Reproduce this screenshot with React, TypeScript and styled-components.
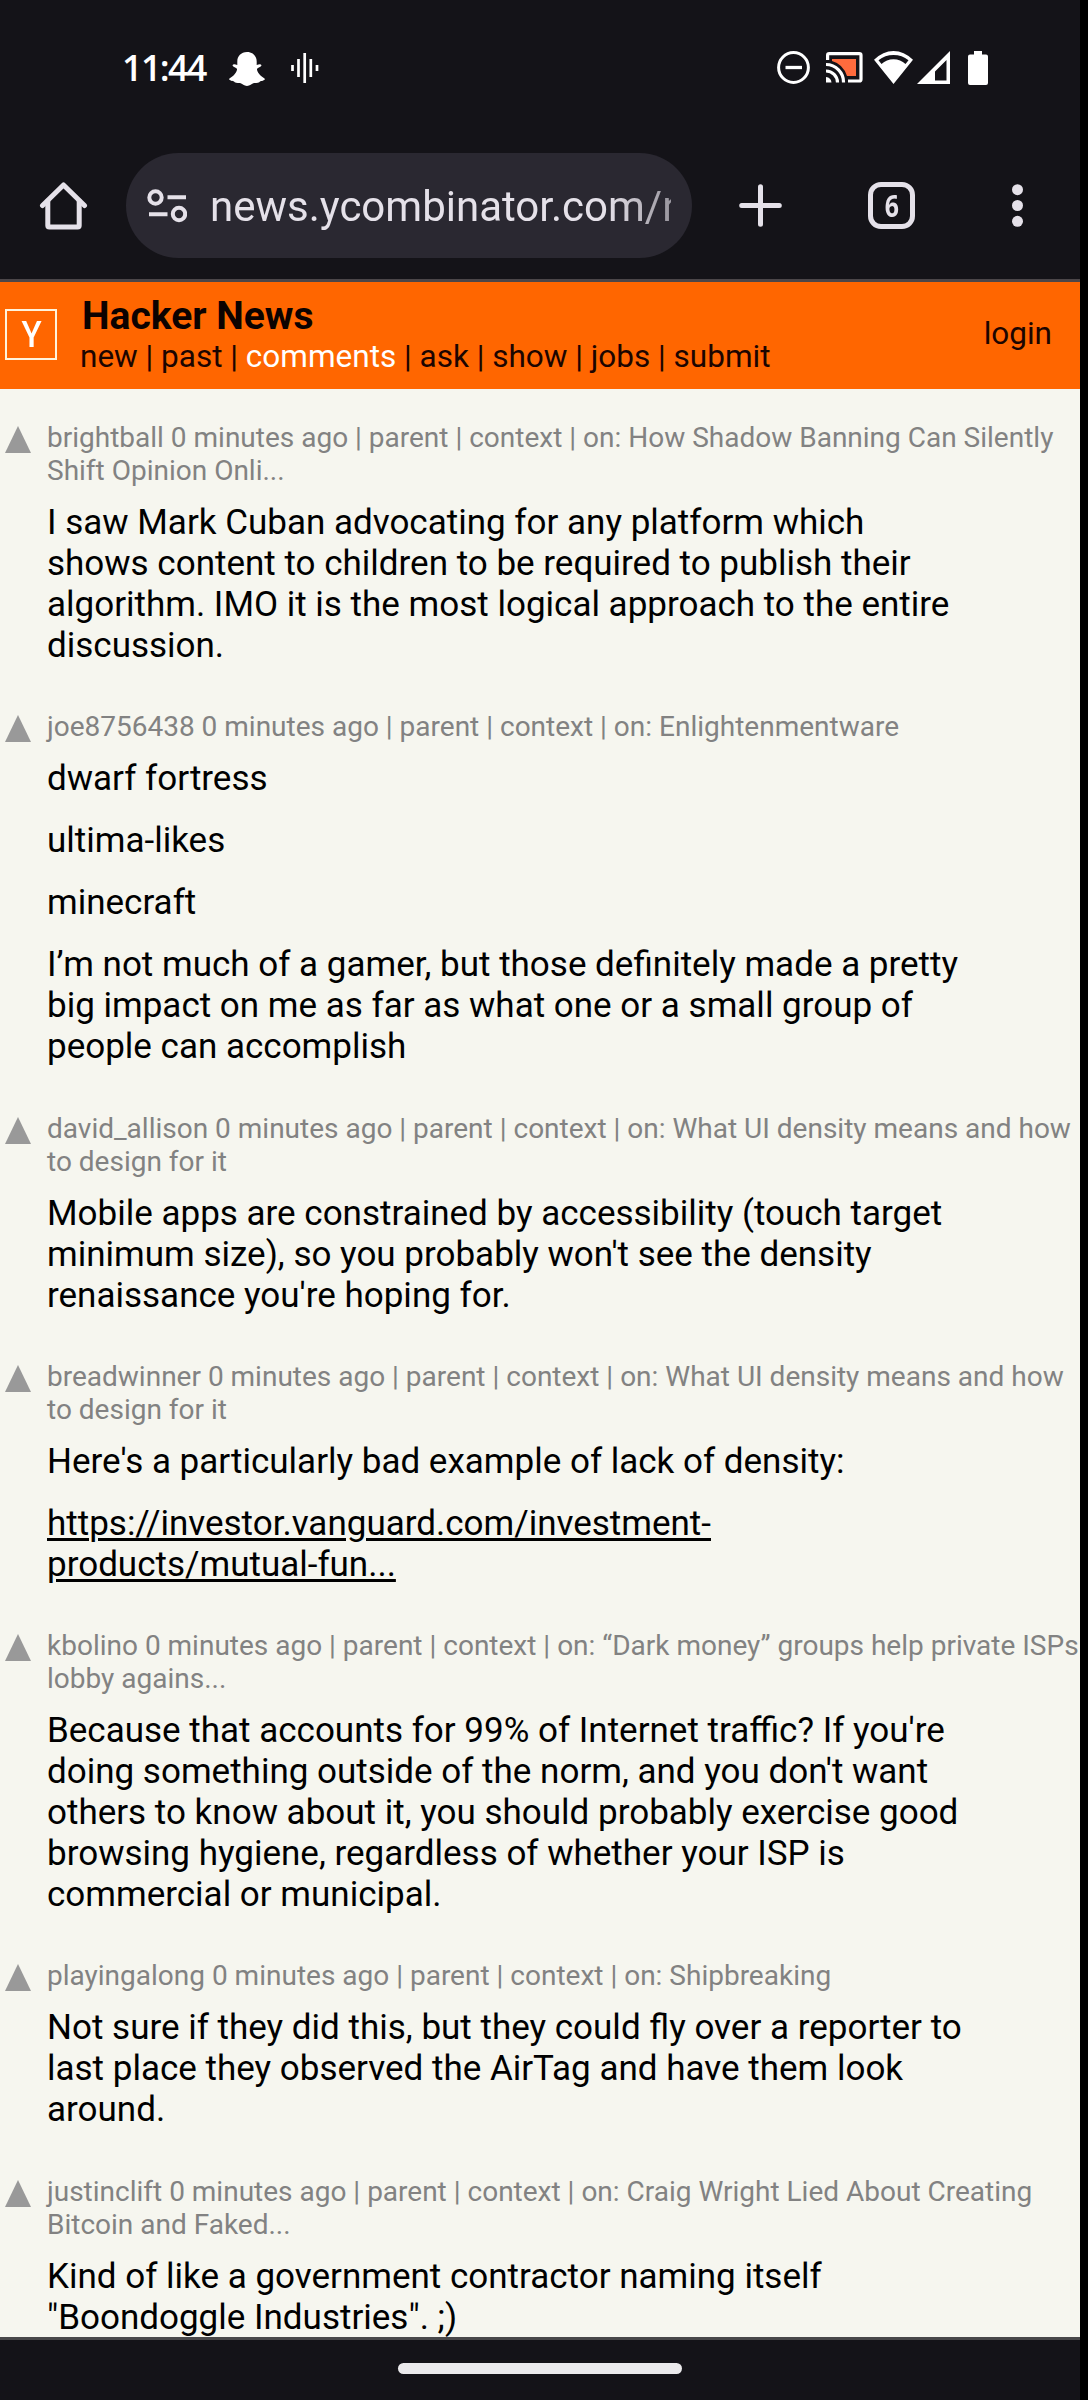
import React from 'react';
import styled, { createGlobalStyle } from 'styled-components';

const GlobalStyle = createGlobalStyle`
  * { box-sizing: border-box; }
  body { margin: 0; background: #000; font-family: Roboto, "Liberation Sans", sans-serif; }
  svg { display: block; }
`;

const Phone = styled.div`
  width: 1080px;
  height: 2400px;
  display: flex;
  flex-direction: column;
  background: #141318;
  overflow: hidden;
`;

const StatusBar = styled.header`
  height: 135px;
  flex: none;
  display: flex;
  align-items: center;
  justify-content: space-between;
  padding: 0 92px 0 122px;
  color: #fff;
`;

const StatusGroup = styled.div`
  display: flex;
  align-items: center;
`;

const Clock = styled.span`
  width: 107px;
  font: 600 36px/40px "Open Sans", sans-serif;
  letter-spacing: -1.7px;
`;

const Toolbar = styled.div`
  height: 144px;
  flex: none;
  display: flex;
  align-items: center;
  padding: 0 56px 3px 39px;
  color: #e5e1e9;
`;

const AddressBar = styled.div`
  width: 566px;
  height: 105px;
  margin-left: 38px;
  padding: 0 21px;
  display: flex;
  align-items: center;
  border-radius: 53px;
  background: #2a2831;
`;

const Url = styled.div`
  flex: 1;
  margin-left: 23px;
  padding-top: 3px;
  overflow: hidden;
  white-space: nowrap;
  font-size: 42px;
  line-height: 56px;
  mask-image: linear-gradient(to right, #000 86%, rgba(0, 0, 0, 0.6) 100%);
`;

const IconButton = styled.button<{ $gap?: number }>`
  flex: none;
  margin: 0 0 0 ${(p) => p.$gap ?? 0}px;
  padding: 0;
  border: 0;
  background: none;
  color: inherit;
`;

const TabCount = styled(IconButton)`
  width: 47px;
  height: 47px;
  border: 5px solid currentColor;
  border-radius: 13px;
  display: flex;
  align-items: center;
  justify-content: center;
  font: 700 31px/37px "Open Sans", sans-serif;

  span { transform: scaleX(0.8); }
`;

const Page = styled.main`
  flex: 1;
  min-height: 0;
  overflow: hidden;
  border-top: 3px solid #4b4649;
  border-bottom: 3px solid #49484a;
  background: #f6f6ef;
  color: #000;
`;

const SiteHeader = styled.div`
  height: 107px;
  display: flex;
  align-items: center;
  padding: 0 28px 0 5px;
  background: #ff6600;
`;

const Logo = styled.div`
  width: 52px;
  height: 51px;
  margin-bottom: 2px;
  display: flex;
  align-items: center;
  justify-content: center;
  border: 2px solid #fff3dc;
  color: #fff;
  font-size: 37.5px;
  font-weight: 500;
  line-height: 47px;

  span { transform: scaleX(0.88); }
`;

const SiteNav = styled.div`
  flex: 1;
  margin-left: 23px;
  padding-bottom: 2px;
  color: #1c0500;
`;

const SiteName = styled.div`
  padding-left: 2px;
  font-size: 39px;
  font-weight: 700;
  line-height: 44px;
  color: #0c0200;
`;

const Links = styled.nav`
  font-size: 31.5px;
  line-height: 38px;
  white-space: nowrap;
`;

const NavLink = styled.a<{ $active?: boolean }>`
  color: ${(p) => (p.$active ? '#fff' : 'inherit')};
`;

const Login = styled.a`
  padding-bottom: 3px;
  font-size: 31.5px;
  line-height: 38px;
  color: #1c0500;
`;

const CommentList = styled.div`
  padding-top: 32px;
`;

const CommentRow = styled.article`
  display: flex;
  align-items: flex-start;
  margin-bottom: 44.3px;
`;

const Vote = styled.div`
  flex: none;
  width: 47px;
  padding: 5px 0 0 5px;
`;

const CommentMain = styled.div`
  white-space: pre;
`;

const Meta = styled.div`
  font-size: 28px;
  line-height: 33px;
  color: #828282;
`;

const Text = styled.div`
  margin-top: 15px;
  font-size: 35px;
  line-height: 41px;
`;

const Paragraph = styled.p<{ $link?: boolean }>`
  margin: 0;
  & + & { margin-top: 21px; }
  text-decoration: ${(p) => (p.$link ? 'underline 3px' : 'none')};
  text-underline-offset: 3px;
`;

const GestureBar = styled.footer`
  height: 60px;
  flex: none;
  display: flex;
  justify-content: center;
  padding-top: 23px;
`;

const GestureHandle = styled.div`
  width: 284px;
  height: 11px;
  border-radius: 6px;
  background: #ebeaec;
`;

const SnapIcon = () => (
  <svg width="36" height="34" viewBox="0 0 36 34" fill="currentColor">
    <path d="M18 0C12 0 8.300 4.300 8.300 9.500V13C6 12.200 4 12 3.500 13.200C3.300 14.700 6.500 15.500 7.700 16.500C9 18 6 22 4.500 23.500C3 25 .5 26 .1 27C0 28.700 4 29 5 29.500C5.500 31 8 31 11 31C13.500 31.500 15 34 18 34S22.500 31.500 25 31C28 31 30.500 31 31 29.500C32 29 36 28.700 35.900 27C35.500 26 33 25 31.500 23.500C30 22 27 18 28.300 16.500C29.500 15.500 32.700 14.700 32.500 13.200C32 12 30 12.200 27.700 13V9.500C27.700 4.300 24 0 18 0Z" />
  </svg>
);

const WaveIcon = () => (
  <svg width="28" height="30" viewBox="0 0 28 30" stroke="currentColor" strokeWidth="2.700">
    <path d="M1.500 12V18M7.500 6V24M13.700 0V30M19.800 6V24M26 12V18" />
  </svg>
);

const DndIcon = () => (
  <svg width="33" height="33" viewBox="0 0 33 33" fill="none" stroke="currentColor">
    <circle cx="16.500" cy="16.500" r="14.900" strokeWidth="3" />
    <path d="M8.500 16.500H25" strokeWidth="3.300" />
  </svg>
);

const CastIcon = () => (
  <svg width="37" height="31" viewBox="0 0 37 31" fill="none" stroke="currentColor" strokeWidth="3.200">
    <path d="M6 7H30V24H21Q17 12 6 9Z" fill="#ff6b3d" stroke="none" />
    <path d="M1.600 8V3.200Q1.600 1.600 3.200 1.600H33.300Q35 1.600 35 3.200V27.200Q35 29 33.300 29H22" />
    <path d="M0 12.500A17.500 17.500 0 0 1 17.500 30.500M0 19A11.500 11.500 0 0 1 11.500 30.500" />
    <path d="M0 25Q5 25.500 5.500 30.500H0Z" fill="currentColor" stroke="none" />
  </svg>
);

const WifiIcon = () => (
  <svg width="39" height="33" viewBox="0 0 39 33" fill="currentColor">
    <path fillRule="evenodd" d="M19.500 33L0 8.800Q9 0 19.500 0T39 8.800ZM4.500 9.200L7.500 13Q12.500 8.300 19.500 8.300T31.500 13L34.500 9.200Q28 4 19.500 4T4.500 9.200Z" />
  </svg>
);

const SignalIcon = () => (
  <svg width="33" height="33" viewBox="0 0 33 33" fill="currentColor">
    <path fillRule="evenodd" d="M33 0V33H0ZM29.500 9L18 20.500V29.500H29.500Z" />
  </svg>
);

const BatteryIcon = () => (
  <svg width="20" height="34" viewBox="0 0 20 34" fill="currentColor">
    <path d="M6 0H14V3.500H18Q20 3.500 20 5.500V32Q20 34 18 34H2Q0 34 0 32V5.500Q0 3.500 2 3.500H6Z" />
  </svg>
);

const HomeIcon = () => (
  <svg width="49" height="48" viewBox="0 0 49 48" fill="none" stroke="currentColor" strokeWidth="5" strokeLinejoin="round" strokeLinecap="round">
    <path d="M3.500 23.500L24.500 3L45.500 23.500" />
    <path d="M8.800 19V43.500Q8.800 45 10.300 45H38.700Q40.200 45 40.200 43.500V19" />
  </svg>
);

const TuneIcon = () => (
  <svg width="40" height="34" viewBox="0 0 40 34" fill="none" stroke="currentColor" strokeWidth="4">
    <circle cx="8.500" cy="8.500" r="6.200" />
    <circle cx="32" cy="25" r="6.200" />
    <path d="M20.500 8.300H39M2 25.300H20.500" />
  </svg>
);

const PlusIcon = () => (
  <svg width="43" height="43" viewBox="0 0 43 43" stroke="currentColor" strokeWidth="5" strokeLinecap="round">
    <path d="M21.500 2.700V40.300M2.700 21.500H40.300" />
  </svg>
);

const MenuIcon = () => (
  <svg width="11" height="43" viewBox="0 0 11 43" fill="currentColor">
    <circle cx="5.500" cy="5.700" r="5.500" />
    <circle cx="5.500" cy="21.500" r="5.500" />
    <circle cx="5.500" cy="37.300" r="5.500" />
  </svg>
);

const UpvoteIcon = () => (
  <svg width="26" height="27" viewBox="0 0 26 27" fill="#999">
    <path d="M13 0L26 27H0Z" />
  </svg>
);

const StatusIcon = styled.span<{ $gap: number; $drop?: number }>`
  margin-left: ${(p) => p.$gap}px;
  padding-top: ${(p) => p.$drop ?? 0}px;
`;

const links = ['new', 'past', 'comments', 'ask', 'show', 'jobs', 'submit'];

type Comment = { user: string; on: string; text: string[]; linkAt?: number };

const comments: Comment[] = [
  {
    user: 'brightball',
    on: 'How Shadow Banning Can Silently\nShift Opinion Onli...',
    text: ['I saw Mark Cuban advocating for any platform which\nshows content to children to be required to publish their\nalgorithm. IMO it is the most logical approach to the entire\ndiscussion.'],
  },
  {
    user: 'joe8756438',
    on: 'Enlightenmentware',
    text: ['dwarf fortress', 'ultima-likes', 'minecraft', 'I’m not much of a gamer, but those definitely made a pretty\nbig impact on me as far as what one or a small group of\npeople can accomplish'],
  },
  {
    user: 'david_allison',
    on: 'What UI density means and how\nto design for it',
    text: ["Mobile apps are constrained by accessibility (touch target\nminimum size), so you probably won't see the density\nrenaissance you're hoping for."],
  },
  {
    user: 'breadwinner',
    on: 'What UI density means and how\nto design for it',
    text: ["Here's a particularly bad example of lack of density:", 'https://investor.vanguard.com/investment-\nproducts/mutual-fun...'],
    linkAt: 1,
  },
  {
    user: 'kbolino',
    on: '“Dark money” groups help private ISPs\nlobby agains...',
    text: ["Because that accounts for 99% of Internet traffic? If you're\ndoing something outside of the norm, and you don't want\nothers to know about it, you should probably exercise good\nbrowsing hygiene, regardless of whether your ISP is\ncommercial or municipal."],
  },
  {
    user: 'playingalong',
    on: 'Shipbreaking',
    text: ['Not sure if they did this, but they could fly over a reporter to\nlast place they observed the AirTag and have them look\naround.'],
  },
  {
    user: 'justinclift',
    on: 'Craig Wright Lied About Creating\nBitcoin and Faked...',
    text: ['Kind of like a government contractor naming itself\n"Boondoggle Industries". ;)'],
  },
];

export default function App() {
  return (
    <>
      <GlobalStyle />
      <Phone>
        <StatusBar>
          <StatusGroup>
            <Clock>11:44</Clock>
            <StatusIcon $gap={0} $drop={2}><SnapIcon /></StatusIcon>
            <StatusIcon $gap={26}><WaveIcon /></StatusIcon>
          </StatusGroup>
          <StatusGroup>
            <StatusIcon $gap={0}><DndIcon /></StatusIcon>
            <StatusIcon $gap={16}><CastIcon /></StatusIcon>
            <StatusIcon $gap={11}><WifiIcon /></StatusIcon>
            <StatusIcon $gap={4}><SignalIcon /></StatusIcon>
            <StatusIcon $gap={18}><BatteryIcon /></StatusIcon>
          </StatusGroup>
        </StatusBar>
        <Toolbar>
          <IconButton><HomeIcon /></IconButton>
          <AddressBar>
            <TuneIcon />
            <Url>news.ycombinator.com/n</Url>
          </AddressBar>
          <IconButton $gap={47}><PlusIcon /></IconButton>
          <TabCount $gap={86}><span>6</span></TabCount>
          <IconButton $gap={97}><MenuIcon /></IconButton>
        </Toolbar>
        <Page>
          <SiteHeader>
            <Logo><span>Y</span></Logo>
            <SiteNav>
              <SiteName>Hacker News</SiteName>
              <Links>
                {links.map((l, i) => (
                  <React.Fragment key={l}>
                    {i > 0 && ' | '}
                    <NavLink $active={l === 'comments'}>{l}</NavLink>
                  </React.Fragment>
                ))}
              </Links>
            </SiteNav>
            <Login>login</Login>
          </SiteHeader>
          <CommentList>
            {comments.map((c) => (
              <CommentRow key={c.user}>
                <Vote><UpvoteIcon /></Vote>
                <CommentMain>
                  <Meta>{`${c.user} 0 minutes ago | parent | context | on: ${c.on}`}</Meta>
                  <Text>
                    {c.text.map((t, i) => (
                      <Paragraph key={i} $link={c.linkAt === i}>{t}</Paragraph>
                    ))}
                  </Text>
                </CommentMain>
              </CommentRow>
            ))}
          </CommentList>
        </Page>
        <GestureBar><GestureHandle /></GestureBar>
      </Phone>
    </>
  );
}
